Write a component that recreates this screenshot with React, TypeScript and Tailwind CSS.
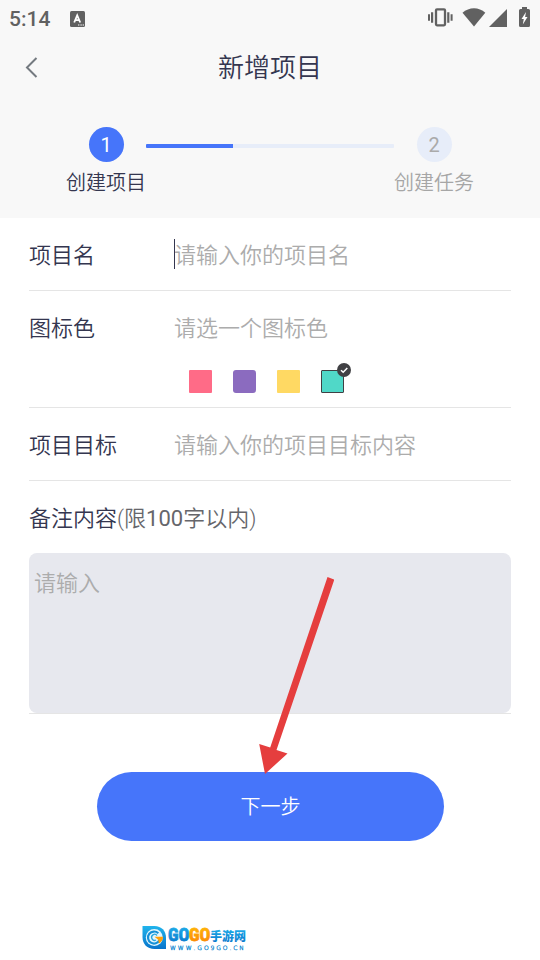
import { useState } from "react";
import type { ReactNode } from "react";

interface SwatchOption {
  value: string;
  label: string;
  className: string;
}

const SWATCHES: SwatchOption[] = [
  { value: "pink", label: "粉色", className: "rounded-[1px] bg-[#ff6b87]" },
  { value: "purple", label: "紫色", className: "rounded-[3px] bg-[#8b6bbf]" },
  { value: "yellow", label: "黄色", className: "rounded-[1px] bg-[#ffd963]" },
  { value: "teal", label: "青色", className: "rounded-[1px] bg-[#50d8c8]" },
];

function StatusBar() {
  return (
    <div className="flex h-9 items-center justify-between pr-2 pl-[9px] text-[#616161]">
      <div className="flex items-center gap-5">
        <span className="pt-px font-[Roboto] text-[21px] leading-6 font-medium">5:14</span>
        <svg viewBox="0 0 15 16" className="mt-px h-4 w-[15px]" aria-hidden="true">
          <rect width="15" height="16" rx="1.5" fill="currentColor" />
          <path d="M4.200 11.500 7.200 4.300 10.200 11.500M5.300 9.200h3.800" fill="none" stroke="#fff" strokeWidth="1.800" />
          <path d="M8 14h1.400M10.400 14h1.400M12.600 14H14" stroke="#fff" strokeWidth="1.200" />
        </svg>
      </div>
      <svg viewBox="0 0 104 24" className="h-6 w-[104px]" fill="currentColor" aria-hidden="true">
        <rect x="8" y="3.300" width="9" height="16" rx="1" fill="none" stroke="currentColor" strokeWidth="2.300" />
        <path d="M0 8.300h2v6.400H0zM3 6.300h2.200v10.400H3zM19.200 6.300h2.200v10.400h-2.200zM22.600 8.300h2v6.400h-2z" />
        <path d="M34.500 6.700C41 .6 51 .6 57.300 6.700L46 20.500z" />
        <path d="M79 3v18H61z" />
        <path d="M91 4.500q0-1.500 1.500-1.500H94V1h5v2h1.500q1.500 0 1.500 1.500v15q0 1.500-1.500 1.500h-8q-1.500 0-1.500-1.500z" />
        <path d="m98 6-4.500 7h2.300l-1 5.500 4.700-7.500h-2.400z" fill="#fff" />
      </svg>
    </div>
  );
}

interface StepProps {
  index: number;
  label: string;
  active?: boolean;
}

function Step({ index, label, active = false }: StepProps) {
  return (
    <li className="flex flex-col items-center">
      <span className={`flex size-[35px] items-center justify-center rounded-full font-[Roboto] text-xl font-normal ${active ? "bg-[#4675fa] text-white" : "bg-[#e7edf9] text-[#aaaaaa]"}`}>{index}</span>
      <span className={`mt-[5px] text-xl leading-8 ${active ? "text-[#34364f]" : "text-[#a6a6a6]"}`}>{label}</span>
    </li>
  );
}

interface FieldRowProps {
  id: string;
  label: string;
  placeholder: string;
  caret?: boolean;
  readOnly?: boolean;
  children?: ReactNode;
}

function FieldRow({ id, label, placeholder, caret = false, readOnly = false, children }: FieldRowProps) {
  return (
    <div className="border-b border-[#e5e5e5]">
      <div className="flex h-[72px] items-center pt-[3px]">
        <label htmlFor={id} className="w-[145px] shrink-0 text-[#34364f]">{label}</label>
        <div className="relative flex-1">
          {caret && <span className="absolute -top-0.5 left-0 h-[30px] w-px bg-[#34364f]" />}
          <input id={id} type="text" readOnly={readOnly} placeholder={placeholder} className="block h-[30px] w-full bg-transparent text-[#34364f] outline-none placeholder:text-[#acacac]" />
        </div>
      </div>
      {children}
    </div>
  );
}

function SwatchPicker() {
  const [selected, setSelected] = useState("teal");

  return (
    <div role="radiogroup" aria-label="图标色" className="flex h-11 gap-[21px] pt-[7px] pl-40">
      {SWATCHES.map((swatch) => (
        <label key={swatch.value} className="relative block size-[23px]">
          <input type="radio" name="color" aria-label={swatch.label} checked={selected === swatch.value} onChange={() => setSelected(swatch.value)} className={`block size-full appearance-none checked:border checked:border-[#404044] ${swatch.className}`} />
          {selected === swatch.value && (
            <svg viewBox="0 0 14 14" className="absolute -top-[7px] -right-[7px] size-3.5" aria-hidden="true">
              <circle cx="7" cy="7" r="7" fill="#404044" />
              <path d="m4 7.200 2.200 2.100L10.300 5" fill="none" stroke="#fff" strokeWidth="1.500" />
            </svg>
          )}
        </label>
      ))}
    </div>
  );
}

function PointerArrow() {
  return (
    <svg viewBox="0 0 76 198" className="pointer-events-none absolute -top-[196px] left-1/2 h-[198px] w-[76px] -translate-x-3" aria-hidden="true">
      <path d="M69.500 1 76.300 3.500 18.500 174 29.500 177.500 7 198 1.200 168 12.200 171.400z" fill="#e53e3e" />
    </svg>
  );
}

function BrandLogo() {
  return (
    <svg viewBox="0 0 106 28" className="h-7 w-[106px]" role="img" aria-label="GOGO手游网">
      <defs>
        <linearGradient id="logo-blue" x1="0" y1="0" x2="0" y2="1">
          <stop offset="0" stopColor="#20b4ec" />
          <stop offset="1" stopColor="#0874cb" />
        </linearGradient>
        <linearGradient id="logo-orange" x1="0" y1="0" x2="0" y2="1">
          <stop offset="0" stopColor="#ffbd08" />
          <stop offset="1" stopColor="#fa8205" />
        </linearGradient>
      </defs>
      <path d="M1.500 2h12C20.500 2 25 7 25 13.500V25H13.500C6 25 1.500 20 1.500 13z" fill="url(#logo-blue)" />
      <circle cx="13.300" cy="13.500" r="8.500" fill="#e4f6fd" />
      <path d="M17.300 9.300A6 6 0 1 0 18.500 16" fill="none" stroke="#1591d8" strokeWidth="2.200" />
      <path d="M16 11.500A3 3 0 1 0 15 16" fill="none" stroke="#28a5df" strokeWidth="1.300" />
      <path d="M13.500 12.800h8.500c0 3-1.500 5.400-4 6.700l-.8-3.800z" fill="#ffa00a" />
      <g fontFamily="'Liberation Sans Narrow', 'Roboto Condensed', 'Liberation Sans', sans-serif" fontSize="18" fontWeight="700" strokeWidth="0.8">
        <text x="27" y="17" fill="url(#logo-blue)" stroke="url(#logo-blue)">GO</text>
        <text x="48" y="17" fill="url(#logo-orange)" stroke="url(#logo-orange)">GO</text>
      </g>
      <text x="69" y="17" fontFamily="'Noto Sans CJK SC', sans-serif" fontSize="12" fontWeight="900" fill="url(#logo-blue)">手游网</text>
      <text x="29" y="26" fontFamily="'DejaVu Sans', sans-serif" fontSize="6" fill="#0d86cf" stroke="#0d86cf" strokeWidth="0.3">W W W . G O 9 G O . C N</text>
    </svg>
  );
}

export default function App() {
  return (
    <div className="min-h-screen bg-white font-[Roboto,'Noto_Sans_CJK_SC',sans-serif] text-[22px] leading-[30px] font-[350]">
      <header className="bg-[#f8f8f8] pb-[19px]">
        <StatusBar />
        <div className="relative flex h-[62px] items-center justify-center">
          <button type="button" aria-label="返回" className="absolute left-5 flex size-6 items-center justify-center text-[#747a80]">
            <svg viewBox="0 0 24 24" className="size-6" fill="none" stroke="currentColor" strokeWidth="2" aria-hidden="true">
              <path d="M16.500 3 7 12.500 16.500 22" />
            </svg>
          </button>
          <h1 className="pt-0.5 text-[26px] leading-9 font-[350] text-[#34364f]">新增项目</h1>
        </div>
        <ol className="flex px-[66px] pt-[29px]">
          <Step index={1} label="创建项目" active />
          <li aria-hidden="true" className="mt-[17px] h-1 flex-1 overflow-hidden rounded-[1px] bg-[#e7edf9]">
            <div className="h-full w-[35%] bg-[#4675fa]" />
          </li>
          <Step index={2} label="创建任务" />
        </ol>
      </header>

      <form onSubmit={(event) => event.preventDefault()}>
        <div className="px-[29px]">
          <FieldRow id="name" label="项目名" placeholder="请输入你的项目名" caret />
          <FieldRow id="color" label="图标色" placeholder="请选一个图标色" readOnly>
            <SwatchPicker />
          </FieldRow>
          <FieldRow id="goal" label="项目目标" placeholder="请输入你的项目目标内容" />
          <div className="border-b border-[#e5e5e5]">
            <label htmlFor="note" className="flex h-[72px] items-center pt-[3px] text-[#34364f]">
              备注内容
              <span className="text-[#66666b]">(限<span className="font-normal">100</span>字以内)</span>
            </label>
            <textarea id="note" maxLength={100} placeholder="请输入" className="block h-40 w-full resize-none rounded-lg bg-[#e7e8ee] px-[5px] py-4 text-[#34364f] outline-none placeholder:text-[#acacac]" />
          </div>
        </div>
        <div className="relative mt-[58px] pr-24 pl-[97px]">
          <PointerArrow />
          <button type="submit" className="h-[69px] w-full rounded-[35px] bg-[#4675fa] text-xl text-white">下一步</button>
        </div>
      </form>

      <footer className="mt-[83px] pl-[141px]">
        <BrandLogo />
      </footer>
    </div>
  );
}
